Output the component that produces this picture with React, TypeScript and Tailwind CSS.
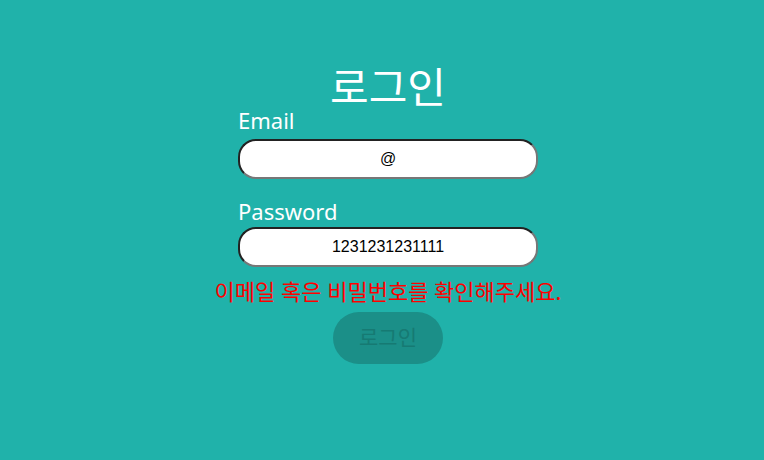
export default function App() {
  const ko = { fontFamily: '"Noto Sans", "Noto Sans CJK KR", sans-serif' };
  const inputCls =
    "h-[40px] w-[300px] rounded-[18px] border-2 border-t-[#222] border-l-[#222] border-b-[#777] border-r-[#777] bg-white text-center text-[16px] text-black outline-none";

  return (
    <div className="min-h-[460px] w-full bg-[#20b2aa] flex flex-col items-center pt-[58px] pl-[12px]" style={ko}>
      <h1 className="text-[42px] leading-[58px] text-white">로그인</h1>
      <form className="w-[300px] flex flex-col" onSubmit={(e) => e.preventDefault()}>
        <label className="text-[22px] leading-[26px] text-white -mt-[9px]">Email</label>
        <input
          defaultValue="@"
          className={`mt-[6px] ${inputCls}`}
          style={{ fontFamily: '"Liberation Sans", Arial, sans-serif' }}
        />
        <label className="mt-[19px] text-[22px] leading-[26px] text-white">Password</label>
        <input
          defaultValue="1231231231111"
          className={`mt-[3px] ${inputCls}`}
          style={{ fontFamily: '"Liberation Sans", Arial, sans-serif' }}
        />
      </form>
      <p className="mt-[9px] text-[22px] leading-[30px] text-[#ff0000] whitespace-nowrap">
        이메일 혹은 비밀번호를 확인해주세요.
      </p>
      <button className="mt-[6px] h-[52px] w-[110px] rounded-[26px] bg-[#1b8f88] text-[21px] text-[#167a73]">
        로그인
      </button>
    </div>
  );
}
